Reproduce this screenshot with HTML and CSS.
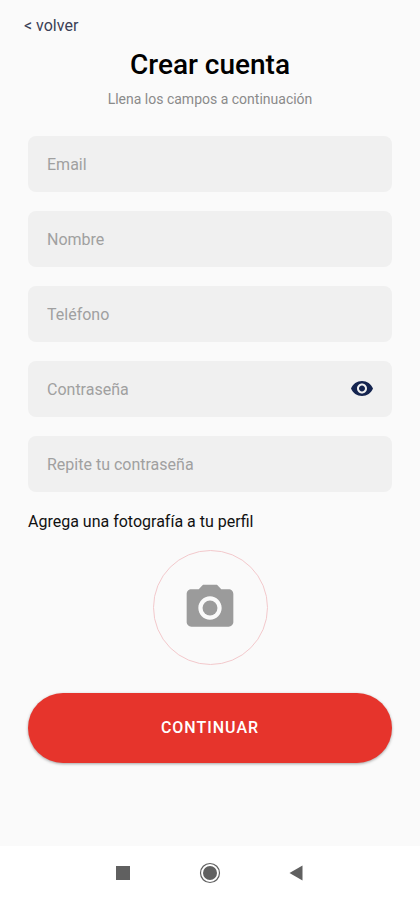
FILE: index.html
```html
<!DOCTYPE html>
<html lang="es">
<head>
  <meta charset="utf-8">
  <meta name="viewport" content="width=device-width, initial-scale=1">
  <title>Crear cuenta</title>
  <link rel="stylesheet" href="styles.css">
</head>
<body>
  <main class="screen">
    <a class="back" href="#">&lt; volver</a>
    <header class="heading">
      <h1 class="title">Crear cuenta</h1>
      <p class="subtitle">Llena los campos a continuación</p>
    </header>
    <form class="form">
      <div class="fields">
        <div class="field"><input class="input" type="email" placeholder="Email" aria-label="Email"></div>
        <div class="field"><input class="input" type="text" placeholder="Nombre" aria-label="Nombre"></div>
        <div class="field"><input class="input" type="tel" placeholder="Teléfono" aria-label="Teléfono"></div>
        <div class="field">
          <input class="input" type="password" placeholder="Contraseña" aria-label="Contraseña">
          <button class="reveal" type="button" aria-label="Mostrar contraseña">
            <svg width="24" height="24" viewBox="0 0 24 24" fill="currentColor"><path d="M12 4C7 4 2.730 7.110 1 11.500c1.730 4.390 6 7.500 11 7.500s9.270-3.110 11-7.500c-1.730-4.390-6-7.500-11-7.500zM12 16.500c-2.760 0-5-2.240-5-5s2.240-5 5-5 5 2.240 5 5-2.240 5-5 5zm0-8c-1.660 0-3 1.340-3 3s1.340 3 3 3 3-1.340 3-3-1.340-3-3-3z"/></svg>
          </button>
        </div>
        <div class="field"><input class="input" type="password" placeholder="Repite tu contraseña" aria-label="Repite tu contraseña"></div>
      </div>
      <p class="photo-label" id="photo-label">Agrega una fotografía a tu perfil</p>
      <button class="photo" type="button" aria-labelledby="photo-label">
        <svg width="56" height="56" viewBox="0 0 24 24" fill="currentColor"><circle cx="12" cy="12" r="3.200"/><path d="M9 2L7.170 4H4c-1.100 0-2 .9-2 2v12c0 1.100.9 2 2 2h16c1.100 0 2-.9 2-2V6c0-1.100-.9-2-2-2h-3.170L15 2H9zm3 15c-2.760 0-5-2.240-5-5s2.240-5 5-5 5 2.240 5 5-2.240 5-5 5z"/></svg>
      </button>
      <button class="submit" type="submit">CONTINUAR</button>
    </form>
  </main>
  <nav class="system-bar" aria-label="Sistema">
    <button class="system-key" type="button" aria-label="Recientes">
      <svg width="24" height="24" viewBox="0 0 24 24"><rect x="5" y="5" width="14" height="14" fill="currentColor"/></svg>
    </button>
    <button class="system-key" type="button" aria-label="Inicio">
      <svg width="24" height="24" viewBox="0 0 24 24"><circle cx="12" cy="12" r="9.500" fill="none" stroke="currentColor" stroke-width="1.200"/><circle cx="12" cy="12" r="7" fill="currentColor"/></svg>
    </button>
    <button class="system-key" type="button" aria-label="Atrás">
      <svg width="24" height="24" viewBox="0 0 24 24"><path d="M17.500 4.500v15L4.500 12z" fill="currentColor"/></svg>
    </button>
  </nav>
</body>
</html>
```
FILE: styles.css
```css
* {
  box-sizing: border-box;
}

body {
  margin: 0;
  min-height: 100vh;
  display: flex;
  flex-direction: column;
  background: #fafafa;
  color: #111;
  font-family: Roboto, "Liberation Sans", sans-serif;
  font-size: 16px;
}

button {
  padding: 0;
  border: 0;
  background: none;
  color: inherit;
  font: inherit;
  cursor: pointer;
}

svg {
  display: block;
}

.screen {
  flex: 1;
  display: flex;
  flex-direction: column;
  padding: 16px 28px 32px;
}

.back {
  align-self: flex-start;
  margin-left: -4px;
  line-height: 20px;
  color: #3a4056;
  text-decoration: none;
}

.heading {
  padding: 13px 0 27px;
  text-align: center;
}

.title {
  margin: 0 0 8px;
  font-size: 28px;
  font-weight: 500;
  line-height: 32px;
  color: #000;
}

.subtitle {
  margin: 0;
  font-size: 14px;
  line-height: 20px;
  color: #8a8a8a;
}

.form,
.fields {
  display: flex;
  flex-direction: column;
}

.fields {
  gap: 19px;
}

.field {
  display: flex;
  align-items: center;
  height: 56px;
  padding: 0 18px 0 19px;
  border-radius: 8px;
  background: #f0f0f0;
}

.input {
  flex: 1;
  min-width: 0;
  padding: 0;
  border: 0;
  outline: 0;
  background: none;
  color: #111;
  font: inherit;
}

.input::placeholder {
  color: #a0a0a0;
  opacity: 1;
}

.reveal {
  color: #14244f;
}

.photo-label {
  margin: 20px 0 18px;
  line-height: 20px;
}

.photo {
  align-self: center;
  display: grid;
  place-items: center;
  width: 115px;
  height: 115px;
  border: 1px solid #f3c9cc;
  border-radius: 50%;
  color: #9b9b9b;
}

.submit {
  height: 70px;
  margin-top: 28px;
  padding-bottom: 2px;
  border-radius: 35px;
  background: #e6342c;
  box-shadow: 0 1px 3px rgba(0, 0, 0, 0.35);
  color: #fff;
  font-weight: 500;
  letter-spacing: 1px;
}

.system-bar {
  display: flex;
  justify-content: center;
  gap: 63px;
  padding: 15px 0;
  background: #fff;
  color: #606060;
}
```
